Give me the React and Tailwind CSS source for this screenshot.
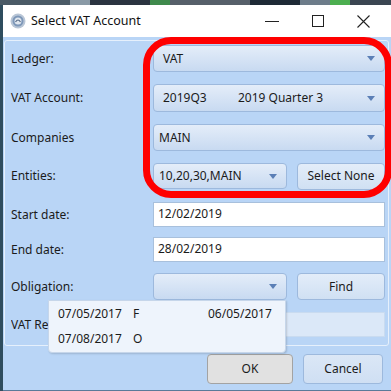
import React from 'react';

const font = { fontFamily: '"Noto Sans", "Open Sans", sans-serif' };

const Arrow = () => (
    <svg width="8" height="5" viewBox="0 0 8 5" className="shrink-0">
        <path d="M0 0 L8 0 L4 5 Z" fill="#5b7fb6" />
    </svg>
);

const Combo = ({ children, className = '' }) => (
    <div
        className={`flex items-center justify-between rounded-[4px] border border-[#9db9dd] bg-linear-to-b from-[#e4edf9] to-[#c8daf1] pr-[9px] text-[12px] text-[#1b1b1b] ${className}`}
    >
        <div className="flex items-center">{children}</div>
        <Arrow />
    </div>
);

const Btn = ({ children, className = '' }) => (
    <div
        className={`flex items-center justify-center rounded-[4px] border text-[12px] text-[#1b1b1b] ${className}`}
    >
        {children}
    </div>
);

const Label = ({ children }) => (
    <div className="w-[148px] shrink-0 pl-[6px] text-[12px] text-[#1b1b1b]">{children}</div>
);

const TextBox = ({ children, className = '' }) => (
    <div
        className={`flex items-start border border-[#a8c0dc] bg-white pl-[4px] pt-[2px] text-[12px] leading-[18px] text-[#1b1b1b] ${className}`}
    >
        {children}
    </div>
);

const App = () => {
    return (
        <div className="relative flex h-[391px] w-[391px] flex-col overflow-hidden bg-[#33505e]" style={font}>
            {/* desktop strip behind the window */}
            <div className="flex h-[5px] shrink-0 bg-[#3b4652]">
                <div className="w-[70px] bg-[#4a5a66]" />
                <div className="w-[20px] bg-[#8a9aa6]" />
                <div className="w-[60px] bg-[#2b3440]" />
                <div className="w-[20px] bg-[#3f8a4c]" />
                <div className="w-[80px] bg-[#56606a]" />
                <div className="w-[50px] bg-[#1e2a36]" />
                <div className="w-[30px] bg-[#6d7c8a]" />
                <div className="w-[20px] bg-[#4caf50]" />
            </div>

            <div className="flex flex-1">
                <div className="w-[3px] shrink-0 bg-[#2f4d5e]" />
                <div className="flex flex-1 flex-col">
                    {/* title bar */}
                    <div className="flex h-[32px] shrink-0 items-center bg-white pl-[7px] pr-[4px]">
                        <svg width="16" height="16" viewBox="0 0 16 16" className="mr-[5px]">
                            <circle cx="8" cy="8" r="7.5" fill="#b9c6d6" />
                            <circle cx="8" cy="8" r="5.5" fill="#7d97b8" />
                            <circle cx="8" cy="8" r="3.5" fill="#dfe6ee" />
                            <path d="M5.5 9 Q8 5 10.5 9" stroke="#5a6f8a" strokeWidth="1.2" fill="none" />
                        </svg>
                        <span className="text-[12.5px] text-[#111]">Select VAT Account</span>
                        <div className="ml-auto flex items-center">
                            <svg width="46" height="32" viewBox="0 0 46 32">
                                <path d="M16 16.5 H30" stroke="#222" strokeWidth="1" />
                            </svg>
                            <svg width="46" height="32" viewBox="0 0 46 32">
                                <rect x="17.5" y="10.5" width="11" height="11" stroke="#222" strokeWidth="1" fill="none" />
                            </svg>
                            <svg width="46" height="32" viewBox="0 0 46 32">
                                <path d="M16.5 10.5 L28.5 22.5 M28.5 10.5 L16.5 22.5" stroke="#222" strokeWidth="1.1" />
                            </svg>
                        </div>
                    </div>

                    {/* body */}
                    <div className="flex flex-1 flex-col border-b border-[#5a7a99] bg-[#b9d5f6] pl-[1px] pr-[2px] pt-[3px]">
                        <div className="flex flex-col rounded-[3px] border border-[#e6f0fc] pb-[8px] pr-[3px]">
                            <div className="mt-[4px] flex h-[27px] items-center">
                                <Label>Ledger:</Label>
                                <Combo className="h-[27px] flex-1 pl-[9px]">VAT</Combo>
                            </div>
                            <div className="mt-[12px] flex h-[28px] items-center">
                                <Label>VAT Account:</Label>
                                <Combo className="h-[28px] flex-1 pl-[9px]">
                                    <span className="w-[75px]">2019Q3</span>
                                    <span>2019 Quarter 3</span>
                                </Combo>
                            </div>
                            <div className="mt-[12px] flex h-[27px] items-center">
                                <Label>Companies</Label>
                                <Combo className="h-[27px] flex-1 pl-[5px]">MAIN</Combo>
                            </div>
                            <div className="mt-[12px] flex h-[26px] items-center">
                                <Label>Entities:</Label>
                                <Combo className="h-[26px] w-[134px] pl-[5px]">10,20,30,MAIN</Combo>
                                <Btn className="ml-[10px] h-[27px] flex-1 border-[#9db9dd] bg-linear-to-b from-[#e3edf9] to-[#d0e0f3]">
                                    Select None
                                </Btn>
                            </div>
                            <div className="mt-[13px] flex h-[25px] items-center">
                                <Label>Start date:</Label>
                                <TextBox className="h-[25px] flex-1">12/02/2019</TextBox>
                            </div>
                            <div className="mt-[10px] flex h-[25px] items-center">
                                <Label>End date:</Label>
                                <TextBox className="h-[25px] flex-1">28/02/2019</TextBox>
                            </div>
                            <div className="mt-[11px] flex h-[27px] items-center">
                                <Label>Obligation:</Label>
                                <Combo className="h-[27px] w-[134px]" />
                                <Btn className="ml-[10px] h-[27px] flex-1 border-[#9db9dd] bg-linear-to-b from-[#e3edf9] to-[#d0e0f3]">
                                    Find
                                </Btn>
                            </div>
                            <div className="mt-[12px] flex h-[25px] items-center">
                                <div className="w-[148px] shrink-0 pl-[6px]">
                                    {/* the open list below covers the rest of this label */}
                                    <div className="w-[37px] overflow-hidden whitespace-nowrap text-[12px] text-[#1b1b1b]">
                                        VAT Reporting:
                                    </div>
                                </div>
                                <div className="h-[25px] flex-1 border border-[#c9dbf0] bg-[#dbe8f8]" />
                            </div>
                        </div>

                        <div className="mt-[8px] flex justify-end gap-[10px] pr-[6px]">
                            <Btn className="h-[30px] w-[86px] border-[#a3a3a3] bg-[#e1e1e1]">OK</Btn>
                            <Btn className="h-[30px] w-[80px] border-[#9db9dd] bg-linear-to-b from-[#dbe7f6] to-[#cfdff3]">
                                Cancel
                            </Btn>
                        </div>
                    </div>
                </div>
            </div>

            {/* open obligation list */}
            <div className="absolute left-[48px] top-[300px] flex h-[53px] w-[238px] flex-col rounded-b-[4px] border border-[#c6d6ea] bg-[#eef4fc] text-[12px] text-[#1b1b1b] shadow-[1px_1px_2px_rgba(0,0,0,0.15)]">
                <div className="flex h-[26px] items-center pl-[9px]">
                    <span className="w-[75px]">07/05/2017</span>
                    <span className="w-[75px]">F</span>
                    <span>06/05/2017</span>
                </div>
                <div className="flex h-[26px] items-center pl-[9px]">
                    <span className="w-[75px]">07/08/2017</span>
                    <span>O</span>
                </div>
            </div>

            {/* red highlight */}
            <div className="pointer-events-none absolute left-[143px] top-[37px] h-[161px] w-[249px] rounded-[28px] border-[7px] border-[#ff0000]" />
        </div>
    );
};

export default App;
